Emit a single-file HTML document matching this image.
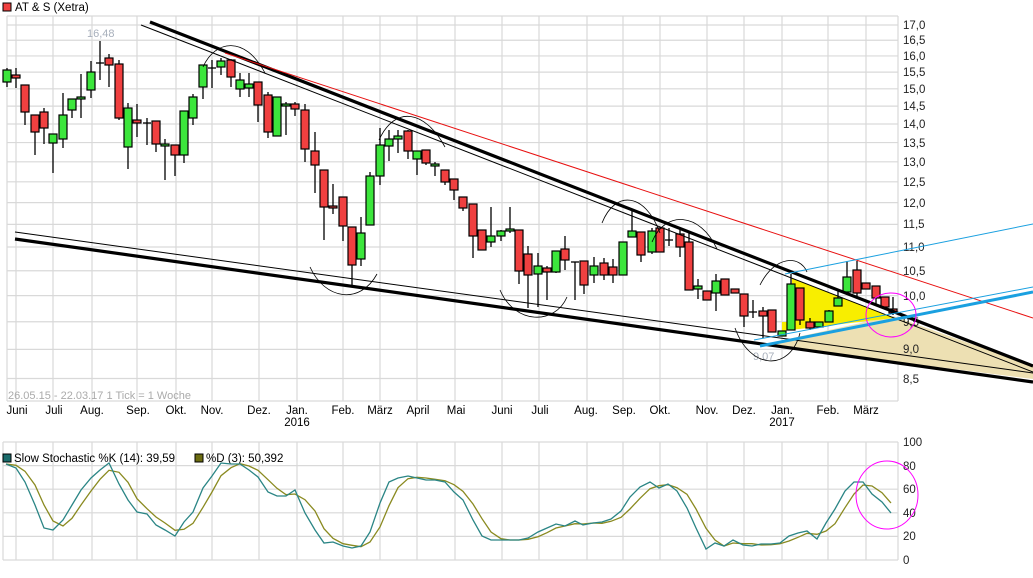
<!DOCTYPE html>
<html><head><meta charset="utf-8"><style>
html,body{margin:0;padding:0;background:#fff;width:1033px;height:578px;overflow:hidden}
svg{display:block;font-family:"Liberation Sans",sans-serif}
</style></head><body>
<svg id="s" width="1033" height="578" viewBox="0 0 1033 578" xmlns="http://www.w3.org/2000/svg">
<rect x="3" y="3" width="8" height="8" fill="#f04040" stroke="#000" stroke-width="1"/>
<text x="15" y="11" font-size="11.5" fill="#000">AT &amp; S (Xetra)</text>
<g id="grid" stroke="#d9d9d9" stroke-width="1.2" fill="none"></g>
<g font-size="11.5" fill="#000" text-anchor="middle">
<text x="17" y="414">Juni</text><text x="54" y="414">Juli</text><text x="92" y="414">Aug.</text><text x="138" y="414">Sep.</text><text x="176" y="414">Okt.</text><text x="212" y="414">Nov.</text><text x="259" y="414">Dez.</text><text x="297" y="414">Jan.</text><text x="297" y="426">2016</text><text x="343" y="414">Feb.</text><text x="380" y="414">März</text><text x="418" y="414">April</text><text x="456" y="414">Mai</text><text x="502" y="414">Juni</text><text x="540" y="414">Juli</text><text x="586" y="414">Aug.</text><text x="624" y="414">Sep.</text><text x="660" y="414">Okt.</text><text x="707" y="414">Nov.</text><text x="744" y="414">Dez.</text><text x="782" y="414">Jan.</text><text x="782" y="426">2017</text><text x="828" y="414">Feb.</text><text x="866" y="414">März</text>
</g>
<text x="8" y="399" font-size="11" fill="#aaa">26.05.15 - 22.03.17   1 Tick = 1 Woche</text>
<text x="87" y="37" font-size="11" fill="#a8b0bc">16,48</text>
<text x="753" y="360" font-size="11" fill="#a8b0bc">9,07</text>
<polygon points="770,343 893,316 1033,366 1033,379 770,346" fill="#ede0b3"/>
<polygon points="792,278 893,318 782,331 782,322 792,322" fill="#f8ee00"/>
<g font-size="11.5" fill="#222">
<text x="903" y="29">17,0</text><text x="903" y="44">16,5</text><text x="903" y="60">16,0</text><text x="903" y="76">15,5</text><text x="903" y="93">15,0</text><text x="903" y="110">14,5</text><text x="903" y="128">14,0</text><text x="903" y="147">13,5</text><text x="903" y="166">13,0</text><text x="903" y="186">12,5</text><text x="903" y="207">12,0</text><text x="903" y="228">11,5</text><text x="903" y="251">11,0</text><text x="903" y="275">10,5</text><text x="903" y="300">10,0</text><text x="903" y="326">9,5</text><text x="903" y="353">9,0</text><text x="903" y="383">8,5</text>
</g>
<g id="cand"></g>
<g fill="none" stroke="#000">
<line x1="150" y1="22" x2="1033" y2="366" stroke-width="3.2"/>
<line x1="141" y1="25" x2="1033" y2="372" stroke-width="1"/>
<line x1="15" y1="239" x2="1033" y2="382" stroke-width="3.2"/>
<line x1="15" y1="232" x2="1033" y2="373" stroke-width="1"/>
<path d="M203,67 C215,40 245,35 265,73" stroke-width="0.8"/>
<path d="M379,140 C395,105 425,110 445,147" stroke-width="0.8"/>
<path d="M310,267 C325,300 360,305 377,274" stroke-width="0.8"/>
<path d="M500,290 C515,325 555,325 567,297" stroke-width="0.8"/>
<path d="M602,223 C615,190 645,192 660,233" stroke-width="0.8"/>
<path d="M652,242 C665,210 700,212 717,249" stroke-width="0.8"/>
<path d="M760,285 C775,255 800,255 807,272" stroke-width="0.8"/>
<path d="M735,328 C750,370 790,372 800,333" stroke-width="0.8"/>
</g>
<line x1="225" y1="53" x2="1033" y2="318" stroke="#e81010" stroke-width="1"/>
<line x1="785" y1="274" x2="1033" y2="224" stroke="#1aa0e0" stroke-width="1"/>
<line x1="754" y1="340" x2="1033" y2="287" stroke="#1aa0e0" stroke-width="1"/>
<line x1="760" y1="346" x2="1033" y2="292" stroke="#1aa0e0" stroke-width="3"/>
<ellipse cx="891" cy="315" rx="25" ry="22" fill="none" stroke="#ff00ff" stroke-width="1"/>
<rect x="3" y="454" width="8" height="8" fill="#1a6b6b" stroke="#000" stroke-width="1"/>
<text x="14" y="462" font-size="11.5" fill="#000">Slow Stochastic %K (14): 39,59</text>
<rect x="195" y="454" width="8" height="8" fill="#6b6b10" stroke="#000" stroke-width="1"/>
<text x="206" y="462" font-size="11.5" fill="#000">%D (3): 50,392</text>
<g font-size="11.5" fill="#222">
<text x="903" y="446">100</text><text x="903" y="470">80</text><text x="903" y="493">60</text><text x="903" y="517">40</text><text x="903" y="540">20</text><text x="903" y="564">0</text>
</g>
<polyline id="kd" fill="none" stroke="#8a8a20" stroke-width="1.3"/>
<polyline id="kk" fill="none" stroke="#2a8585" stroke-width="1.3"/>
<ellipse cx="887" cy="495" rx="31" ry="34" fill="none" stroke="#ff00ff" stroke-width="1"/>
</svg>
<script>
var NS="http://www.w3.org/2000/svg";
function el(p,t,a){var e=document.createElementNS(NS,t);for(var k in a)e.setAttribute(k,a[k]);p.appendChild(e);return e;}
var g=document.getElementById('grid');
var xs=[16,53,92,137,176,212,259,297,343,380,417,455,502,539,587,623,660,707,744,782,828,866];
for(var p=8.5;p<=17.01;p+=0.5){var y=25+510*(Math.log(17)-Math.log(p));el(g,'line',{x1:7,x2:898,y1:y,y2:y});}
el(g,'line',{x1:7,x2:898,y1:16,y2:16});
el(g,'line',{x1:7,x2:898,y1:401,y2:401});
el(g,'line',{x1:7,x2:7,y1:16,y2:401});el(g,'line',{x1:898,x2:898,y1:16,y2:401});
xs.forEach(function(x){el(g,'line',{x1:x,x2:x,y1:16,y2:401});});
for(var v=0;v<=100;v+=20){var y=560-1.18*v;el(g,'line',{x1:3,x2:898,y1:y,y2:y});}
el(g,'line',{x1:3,x2:3,y1:442,y2:560});el(g,'line',{x1:898,x2:898,y1:442,y2:560});
xs.forEach(function(x){el(g,'line',{x1:x,x2:x,y1:442,y2:560});});
var C=[[7,70,82,68,87,'g'],[16,75,78,68,88,'r'],[25,85,112,85,125,'r'],[35,115,132,115,155,'r'],[44,112,128,108,144,'r'],[53,134,143,134,173,'g'],[63,115,139,93,148,'g'],[72,99,110,99,118,'g'],[81,97,99,74,118,'g'],[91,72,90,61,98,'g'],[100,63,63,41,80,'d'],[109,58,65,54,87,'r'],[119,64,118,60,120,'r'],[128,108,147,103,169,'g'],[137,120,123,104,137,'r'],[147,123,123,118,145,'d'],[156,121,144,121,152,'r'],[165,144,146,139,180,'g'],[175,145,155,145,176,'r'],[184,111,155,111,163,'g'],[193,97,118,94,125,'g'],[203,65,87,65,99,'g'],[212,68,68,60,88,'d'],[221,61,67,58,75,'g'],[231,60,77,59,87,'r'],[240,80,89,73,97,'g'],[249,84,88,73,97,'g'],[258,82,105,82,122,'r'],[268,95,132,92,138,'r'],[277,97,136,97,136,'g'],[286,104,106,102,135,'g'],[295,104,109,102,116,'r'],[305,110,149,104,162,'r'],[315,151,165,132,193,'r'],[324,170,207,170,240,'r'],[333,206,208,184,214,'r'],[343,197,226,197,241,'r'],[352,227,265,227,285,'r'],[361,233,259,217,266,'g'],[370,176,225,172,225,'g'],[380,145,176,128,185,'g'],[389,139,146,130,161,'g'],[398,136,139,130,153,'g'],[408,131,151,130,159,'r'],[417,151,159,151,175,'g'],[426,150,163,150,165,'r'],[435,164,166,162,176,'g'],[445,170,182,170,185,'r'],[454,179,190,179,200,'r'],[463,197,208,197,211,'r'],[473,204,236,204,258,'r'],[482,230,250,230,250,'r'],[491,236,242,207,247,'g'],[501,231,236,230,241,'g'],[510,229,231,207,233,'g'],[519,230,271,230,284,'r'],[528,254,275,246,308,'r'],[538,266,274,253,307,'g'],[547,268,272,266,300,'r'],[556,251,272,251,273,'g'],[565,249,260,236,270,'r'],[575,262,262,262,300,'d'],[584,261,285,261,294,'r'],[594,266,275,257,283,'g'],[604,263,275,258,280,'r'],[613,267,275,259,283,'r'],[623,242,275,242,275,'g'],[632,231,237,211,237,'g'],[641,232,255,232,262,'r'],[652,231,252,228,254,'g'],[660,228,252,228,252,'r'],[669,240,240,228,246,'d'],[680,234,247,228,257,'r'],[689,242,290,232,290,'r'],[698,286,289,279,299,'g'],[707,291,300,291,300,'r'],[716,281,293,274,311,'g'],[725,279,295,279,295,'r'],[735,289,293,289,293,'r'],[744,294,316,294,327,'r'],[753,312,312,300,318,'d'],[763,311,316,307,338,'r'],[772,310,332,310,332,'r'],[782,331,336,331,336,'g'],[791,284,330,274,330,'g'],[800,288,320,288,325,'r'],[810,322,328,318,330,'r'],[819,322,327,322,327,'g'],[829,311,322,310,322,'g'],[838,298,306,290,306,'g'],[847,277,292,261,292,'g'],[857,270,293,261,296,'r'],[866,283,289,283,289,'r'],[876,286,298,286,306,'r'],[885,297,307,297,308,'r'],[893,309,313,297,315,'r']];
var cg=document.getElementById('cand');
C.forEach(function(c){
 el(cg,'line',{x1:c[0],x2:c[0],y1:c[3],y2:c[4],stroke:'#000','stroke-width':1.3});
 if(c[5]=='d'){el(cg,'line',{x1:c[0]-4,x2:c[0]+4,y1:c[1],y2:c[1],stroke:'#000','stroke-width':1.3});}
 else el(cg,'rect',{x:c[0]-4,y:c[1],width:8,height:Math.max(2,c[2]-c[1]),fill:c[5]=='g'?'#3ce63c':'#f04040',stroke:'#000','stroke-width':1.2});
});
var K=[[6,464],[16,468],[25,482],[35,505],[44,528],[53,530],[63,520],[72,505],[81,490],[91,478],[100,470],[109,463],[119,484],[128,500],[137,512],[147,514],[156,525],[165,530],[175,536],[184,522],[193,512],[203,488],[212,476],[221,463],[231,464],[240,464],[249,470],[258,477],[268,492],[277,496],[286,496],[295,490],[305,513],[315,530],[324,543],[333,542],[343,546],[352,548],[361,546],[370,532],[380,503],[389,482],[398,478],[408,476],[417,478],[426,480],[435,480],[445,482],[454,492],[463,500],[473,520],[482,536],[491,540],[501,540],[510,540],[519,540],[528,538],[538,532],[547,528],[556,524],[565,526],[575,521],[583,525],[593,523],[602,522],[611,519],[621,511],[630,497],[640,487],[650,482],[659,488],[668,484],[677,491],[687,508],[696,528],[706,549],[715,543],[724,546],[733,540],[743,545],[752,546],[761,544],[771,544],[780,543],[789,536],[798,533],[807,531],[817,539],[826,523],[835,509],[845,491],[854,482],[863,482],[872,494],[882,502],[891,513]];
document.getElementById('kk').setAttribute('points',K.map(function(p){return p.join(',');}).join(' '));
var D=K.map(function(p,i){var a=K[Math.max(0,i-2)][1],b=K[Math.max(0,i-1)][1];return [p[0],((a+b+p[1])/3).toFixed(1)];});
document.getElementById('kd').setAttribute('points',D.map(function(p){return p.join(',');}).join(' '));
</script>
</body></html>
